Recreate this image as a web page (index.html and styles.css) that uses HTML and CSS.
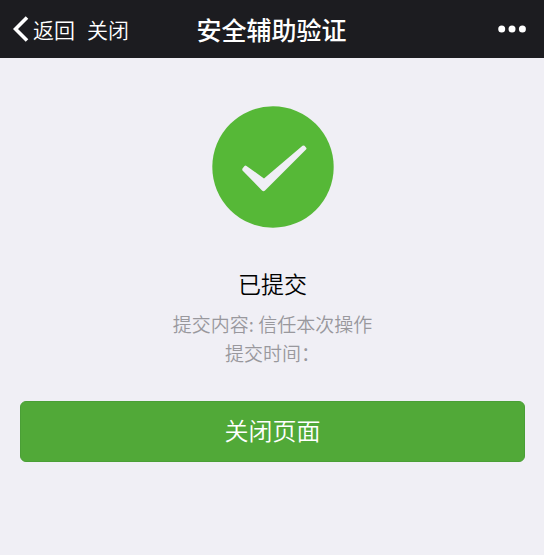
FILE: index.html
```html
<!DOCTYPE html>
<html lang="zh-CN">
<head>
<meta charset="utf-8">
<meta name="viewport" content="width=device-width, initial-scale=1">
<title>安全辅助验证</title>
<link rel="stylesheet" href="styles.css">
</head>
<body>
<header class="navbar">
  <nav class="nav-left">
    <a class="nav-link nav-back" href="#">
      <svg class="chevron" viewBox="0 0 16 28" aria-hidden="true"><path d="M14 2.5 2.5 14 14 25.500"/></svg>
      返回
    </a>
    <a class="nav-link" href="#">关闭</a>
  </nav>
  <h1 class="nav-title">安全辅助验证</h1>
  <button class="nav-more" type="button" aria-label="更多">
    <svg class="dots" viewBox="0 0 32 8" aria-hidden="true"><circle cx="3.700" cy="4" r="3.500"/><circle cx="14" cy="4" r="3.500"/><circle cx="24.400" cy="4" r="3.500"/></svg>
  </button>
</header>
<main class="result">
  <svg class="result-icon" viewBox="0 0 122 122" aria-hidden="true">
    <circle class="disc" cx="61" cy="61" r="60.700"/>
    <path class="check" d="M34.500 60Q33.500 59 32.500 60L30.500 62.500Q30 63.500 30.500 64.500L50 84.500Q51.500 86 53 84.500L94 43.500Q95 42.500 94 41.500L92.500 39.800Q91.500 39 90.500 39.800L52 72.500Z"/>
  </svg>
  <h2 class="result-title">已提交</h2>
  <p class="result-text">提交内容: 信任本次操作</p>
  <p class="result-text">提交时间：</p>
  <button class="close-button" type="button">关闭页面</button>
</main>
</body>
</html>
```
FILE: styles.css
```css
* {
  box-sizing: border-box;
}

body {
  margin: 0;
  min-height: 100vh;
  background: #f0eff5;
  color: #000;
  font-family: "Noto Sans CJK SC", sans-serif;
  font-weight: 350;
}

h1,
h2,
p {
  margin: 0;
  font-weight: inherit;
}

button {
  border: 0;
  padding: 0;
  font-family: inherit;
  font-weight: inherit;
}

.navbar {
  display: grid;
  grid-template-columns: 1fr auto 1fr;
  align-items: center;
  height: 58px;
  padding: 0 14px 0 13px;
  background: #1c1c20;
  color: #fff;
}

.nav-left {
  display: flex;
  gap: 12px;
}

.nav-link {
  display: flex;
  align-items: center;
  color: inherit;
  font-size: 21px;
  line-height: 32px;
  text-decoration: none;
}

.nav-back {
  gap: 4px;
}

.chevron {
  width: 16px;
  height: 28px;
  fill: none;
  stroke: #fff;
  stroke-width: 3.6;
}

.nav-title {
  font-size: 25px;
  font-weight: 500;
  line-height: 36px;
}

.nav-more {
  display: flex;
  justify-self: end;
  background: none;
}

.dots {
  width: 32px;
  height: 8px;
  fill: #fff;
}

.result {
  display: flex;
  flex-direction: column;
  align-items: center;
  padding: 48px 19px 48px 20px;
}

.result-icon {
  width: 122px;
  height: 122px;
}

.disc {
  fill: #56b837;
}

.check {
  fill: #f0eff5;
}

.result-title {
  margin: 38px 0 9px;
  font-size: 23px;
  line-height: 34px;
}

.result-text {
  color: #99989d;
  font-size: 19px;
  line-height: 29px;
}

.close-button {
  width: 100%;
  margin-top: 34px;
  padding: 10px 0 13px;
  border: 1px solid #4a9f36;
  border-radius: 6px;
  background: #51a938;
  color: #fff;
  font-size: 24px;
  line-height: 36px;
}
```
